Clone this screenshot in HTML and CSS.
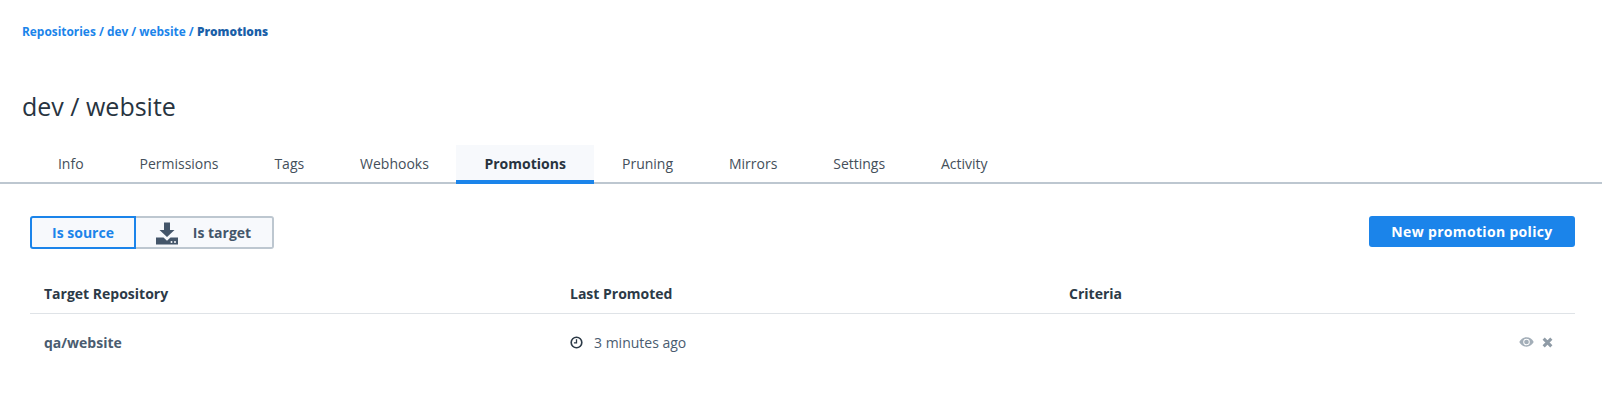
FILE: index.html
```html
<!DOCTYPE html>
<html lang="en">
<head>
<meta charset="utf-8">
<title>dev / website</title>
<link rel="stylesheet" href="styles.css">
</head>
<body>
<nav class="crumbs"><a>Repositories</a> / <a>dev</a> / <a>website</a> / <b>Promotions</b></nav>
<h1 class="title">dev / website</h1>
<div class="tabs">
  <a class="tab">Info</a><a class="tab">Permissions</a><a class="tab">Tags</a><a class="tab">Webhooks</a><a class="tab active">Promotions</a><a class="tab">Pruning</a><a class="tab">Mirrors</a><a class="tab">Settings</a><a class="tab">Activity</a>
</div>
<main class="content">
  <div class="toolbar">
    <div class="toggle">
      <button class="seg selected">Is source</button>
      <button class="seg">
        <svg class="dl" viewBox="0 0 24 24"><path d="M9 1.500h6v7.500h4.500L12 16 4.500 9H9z"/><path d="M1 16.500h7.500l3.500 3.200 3.500-3.200H23v7H1z"/><circle class="dot" cx="16.500" cy="21" r="1"/><circle class="dot" cx="20" cy="21" r="1"/></svg>
        <span>Is target</span>
      </button>
    </div>
    <button class="primary">New promotion policy</button>
  </div>
  <div class="row head">
    <div class="c1">Target Repository</div><div class="c2">Last Promoted</div><div class="c3">Criteria</div>
  </div>
  <div class="row body">
    <div class="c1 repo">qa/website</div>
    <div class="c2 when">
      <svg class="clock" viewBox="0 0 12 12"><circle cx="6" cy="6" r="4.900" fill="none" stroke="currentColor" stroke-width="1.500"/><path d="M6 3v3.300H3.600" fill="none" stroke="currentColor" stroke-width="1.200"/></svg>
      <span>3 minutes ago</span>
    </div>
    <div class="c3 actions">
      <svg class="eye" viewBox="0 0 16 12"><path fill-rule="evenodd" d="M8 1C4.500 1 1.800 3.200.3 6 1.800 8.800 4.500 11 8 11s6.200-2.200 7.700-5C14.200 3.200 11.500 1 8 1zm0 1.500a3.500 3.500 0 1 1 0 7 3.500 3.500 0 0 1 0-7z"/><circle cx="8" cy="6" r="2.500"/></svg>
      <svg class="x" viewBox="0 0 10 10"><path d="M1.500 1.500l7 7M8.500 1.500l-7 7" fill="none" stroke="currentColor" stroke-width="2.800"/></svg>
    </div>
  </div>
</main>
</body>
</html>
```
FILE: styles.css
```css
* { box-sizing: border-box; }
html, body { margin: 0; background: #fff; }
body { font-family: "Open Sans", sans-serif; color: #28343f; height: 411px; overflow: hidden; }
.crumbs { padding: 22px 0 0 22px; font-size: 11.900px; line-height: 18px; font-weight: 700; color: #1b84ea; }
.crumbs b { color: #1a5fa8; }
.title { margin: 48px 0 0 22px; font-size: 25px; line-height: 36px; font-weight: 500; color: #28343f; }
.tabs { display: flex; margin-top: 21px; padding-left: 30px; height: 39px; border-bottom: 2px solid #bdc7d0; }
.tab { height: 39px; padding: 0 27.940px; font-size: 14px; line-height: 38px; color: #444f5a; }
.tab.active { background: #f7f9fc; color: #28343f; font-weight: 700; border-bottom: 4px solid #1b84ea; margin-left: -.5px; padding: 0 28.200px; }
.content { padding: 32px 27px 0 30px; }
.toolbar { display: flex; justify-content: space-between; align-items: flex-start; height: 33px; }
.toggle { display: flex; }
.seg { display: flex; align-items: center; justify-content: center; height: 33px; background: #f7f9fc; font: 700 14px "Open Sans", sans-serif; color: #44566a; border: 2px solid #bdc7d0; border-left: 0; border-radius: 0 3px 3px 0; width: 138px; padding: 0 2px 0 0; gap: 14px; }
.seg.selected { width: 106px; padding: 0; color: #1b84ea; border: 2px solid #1b84ea; border-radius: 3px 0 0 3px; }
.dl { width: 24px; height: 24px; fill: #44566a; }
.dot { fill: #f7f9fc; }
.primary { width: 206px; height: 31px; background: #1b84ea; color: #fff; border: 0; border-radius: 3px; font: 700 14px "Open Sans", sans-serif; letter-spacing: .33px; padding: 0; }
.row { display: flex; align-items: center; }
.head { margin-top: 25px; height: 40px; border-bottom: 1px solid #dfe3e7; font-size: 14px; font-weight: 700; color: #2c3a47; }
.body { height: 56px; font-size: 14px; color: #4a5c70; }
.c1 { width: 526px; padding-left: 14px; }
.c2 { width: 499px; padding-left: 14px; }
.c3 { flex: 1; padding-left: 14px; }
.repo { font-weight: 700; }
.when { display: flex; align-items: center; gap: 11px; }
.clock { width: 13px; height: 13px; color: #2c3a47; }
.actions { display: flex; justify-content: flex-end; align-items: center; gap: 8px; padding-right: 22px; }
.eye { width: 15px; height: 12px; fill: #a3aeb8; }
.x { width: 11px; height: 11px; color: #8f9ba6; }
```
